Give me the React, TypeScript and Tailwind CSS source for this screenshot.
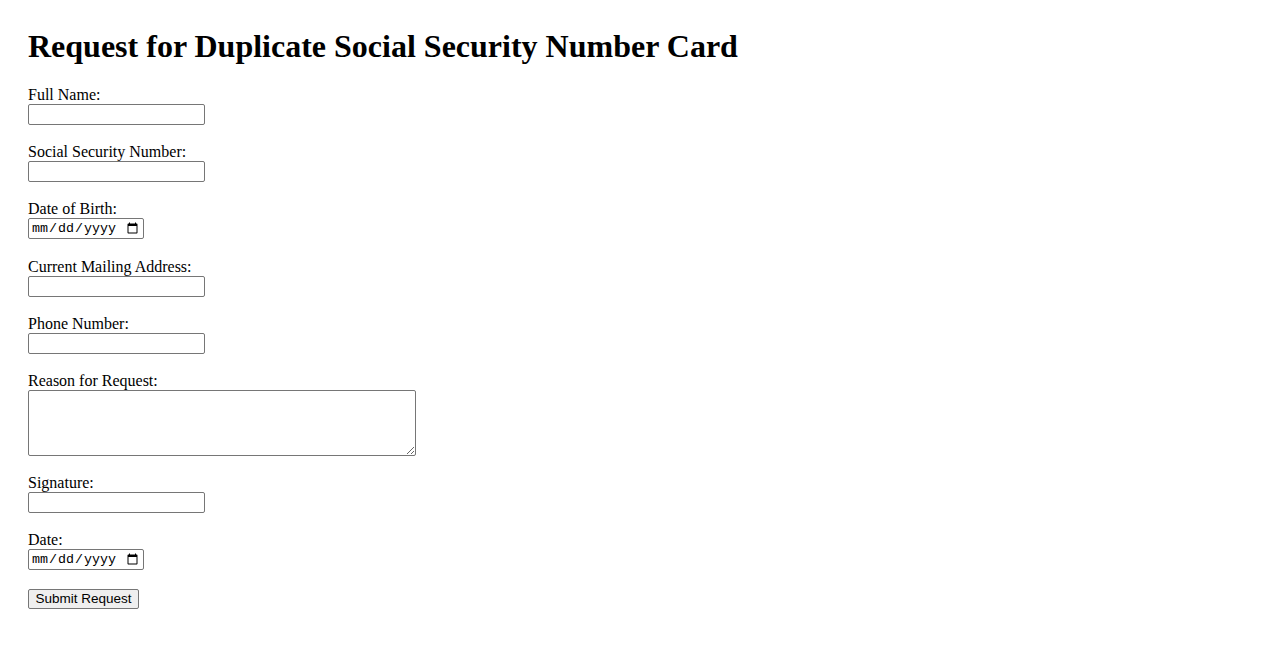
import React from "react";

const serif = { fontFamily: '"Liberation Serif", "Times New Roman", serif' };

function TextField({ label }: { label: string }) {
  return (
    <div className="mb-[18px]">
      <label className="block text-[16px] leading-[18px] text-black">{label}</label>
      <input
        type="text"
        className="block w-[177px] h-[21px] border border-[#767676] rounded-[2px] bg-white px-[2px] text-[13.33px] font-['Liberation_Sans',Arial,sans-serif]"
      />
    </div>
  );
}

function DateField({ label }: { label: string }) {
  return (
    <div className="mb-[19px]">
      <label className="block text-[16px] leading-[18px] text-black">{label}</label>
      <input
        type="date"
        className="block w-[116px] h-[21px] border border-[#767676] rounded-[2px] bg-white px-[2px] text-[13.33px] font-['Liberation_Mono','Courier_New',monospace]"
      />
    </div>
  );
}

export default function App() {
  return (
    <div className="min-h-screen bg-white px-[28px] pt-[28px] text-black" style={serif}>
      <h1 className="text-[32px] font-bold leading-[37px] mb-[21px]">
        Request for Duplicate Social Security Number Card
      </h1>
      <form onSubmit={(e) => e.preventDefault()}>
        <TextField label="Full Name:" />
        <TextField label="Social Security Number:" />
        <DateField label="Date of Birth:" />
        <TextField label="Current Mailing Address:" />
        <TextField label="Phone Number:" />
        <div className="mb-[18px]">
          <label className="block text-[16px] leading-[18px]">Reason for Request:</label>
          <textarea className="block w-[388px] h-[66px] border border-[#767676] rounded-[2px] bg-white p-[2px] text-[13.33px] font-['Liberation_Mono',monospace]" />
        </div>
        <TextField label="Signature:" />
        <DateField label="Date:" />
        <button
          type="submit"
          className="block h-[20px] w-[111px] border border-[#767676] rounded-[2px] bg-[#efefef] text-[13.5px] leading-[16px] text-black font-['Liberation_Sans',Arial,sans-serif]"
        >
          Submit Request
        </button>
      </form>
    </div>
  );
}
